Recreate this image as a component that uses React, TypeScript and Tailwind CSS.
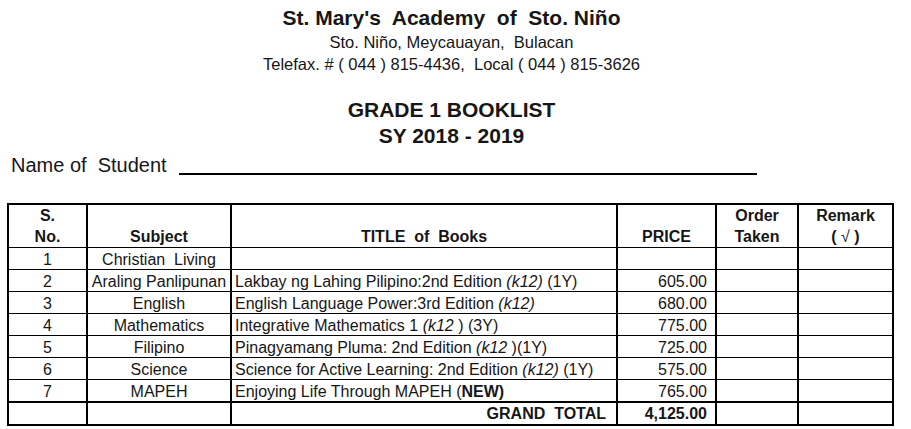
import type { ReactNode } from 'react'

type Row = {
  no: string
  subject: string
  title: ReactNode
  price: string
}

const rows: Row[] = [
  { no: '1', subject: 'Christian  Living', title: null, price: '' },
  {
    no: '2',
    subject: 'Araling Panlipunan',
    title: (
      <>
        Lakbay ng Lahing Pilipino:2nd Edition <i>(k12)</i> (1Y)
      </>
    ),
    price: '605.00',
  },
  {
    no: '3',
    subject: 'English',
    title: (
      <>
        English Language Power:3rd Edition <i>(k12)</i>
      </>
    ),
    price: '680.00',
  },
  {
    no: '4',
    subject: 'Mathematics',
    title: (
      <>
        Integrative Mathematics 1 <i>(k12</i> ) (3Y)
      </>
    ),
    price: '775.00',
  },
  {
    no: '5',
    subject: 'Filipino',
    title: (
      <>
        Pinagyamang Pluma: 2nd Edition <i>(k12</i> )(1Y)
      </>
    ),
    price: '725.00',
  },
  {
    no: '6',
    subject: 'Science',
    title: (
      <>
        Science for Active Learning: 2nd Edition <i>(k12)</i> (1Y)
      </>
    ),
    price: '575.00',
  },
  {
    no: '7',
    subject: 'MAPEH',
    title: (
      <>
        Enjoying Life Through MAPEH (<b>NEW)</b>
      </>
    ),
    price: '765.00',
  },
]

const head = 'flex h-[42px] items-end justify-center text-center font-bold leading-[21px]'
const cell = 'flex h-[22px] items-end border-t border-black leading-[18px] overflow-hidden'

export default function App() {
  return (
    <div className="h-[429px] w-[911px] overflow-hidden bg-white font-['Liberation_Sans',Arial,sans-serif] text-[#161616]">
      <div className="w-[903px] whitespace-pre pt-[5px] text-center">
        <div className="text-[21px] font-bold leading-[26px]">St. Mary's  Academy  of  Sto. Niño</div>
        <div className="text-[16.5px] leading-[22px]">Sto. Niño, Meycauayan,  Bulacan</div>
        <div className="text-[16.5px] leading-[22px]">Telefax. # ( 044 ) 815-4436,  Local ( 044 ) 815-3626</div>
        <div className="mt-[22px] text-[21px] font-bold leading-[26px]">GRADE 1 BOOKLIST</div>
        <div className="text-[21px] font-bold leading-[26px]">SY 2018 - 2019</div>
      </div>

      <div className="mt-[4px] flex h-[24px] items-start">
        <div className="w-[179px] shrink-0 whitespace-pre pl-[11px] text-[20px] leading-[24px]">Name of  Student</div>
        <div className="h-[22px] w-[578px] border-b-2 border-black" />
      </div>

      <div className="ml-[7px] mt-[26px] grid w-max grid-cols-[77px_144px_386px_99px_82px_95px] whitespace-pre border-2 border-black text-[16px]">
        <div className={head}>
          <div>
            S.
            <br />
            No.
          </div>
        </div>
        <div className={`${head} border-l-2 border-black`}>
          <span>Subject</span>
        </div>
        <div className={`${head} border-l-2 border-black`}>
          <span>TITLE  of  Books</span>
        </div>
        <div className={`${head} border-l-2 border-black`}>
          <span>PRICE</span>
        </div>
        <div className={`${head} border-l-2 border-black`}>
          <div>
            Order
            <br />
            Taken
          </div>
        </div>
        <div className={`${head} border-l-2 border-black`}>
          <div>
            Remark
            <br />( <span className="font-normal">√</span> )
          </div>
        </div>

        {rows.map((r) => (
          <div key={r.no} className="contents">
            <div className={`${cell} justify-center`}>
              <span>{r.no}</span>
            </div>
            <div className={`${cell} justify-center border-l-2`}>
              <span>{r.subject}</span>
            </div>
            <div className={`${cell} border-l-2 pl-[3px]`}>
              <span>{r.title}</span>
            </div>
            <div className={`${cell} justify-end border-l-2 pr-[8px]`}>
              <span>{r.price}</span>
            </div>
            <div className={`${cell} border-l-2`} />
            <div className={`${cell} border-l-2`} />
          </div>
        ))}

        <div className="h-[23px] border-t-2 border-black" />
        <div className="h-[23px] border-l-2 border-t-2 border-black" />
        <div className="flex h-[23px] items-end justify-end border-l-2 border-t-2 border-black pr-[10px] font-bold leading-[21px]">
          <span>GRAND  TOTAL</span>
        </div>
        <div className="flex h-[23px] items-end justify-end border-l-2 border-t-2 border-black pr-[8px] font-bold leading-[21px]">
          <span>4,125.00</span>
        </div>
        <div className="h-[23px] border-l-2 border-t-2 border-black" />
        <div className="h-[23px] border-l-2 border-t-2 border-black" />
      </div>
    </div>
  )
}
